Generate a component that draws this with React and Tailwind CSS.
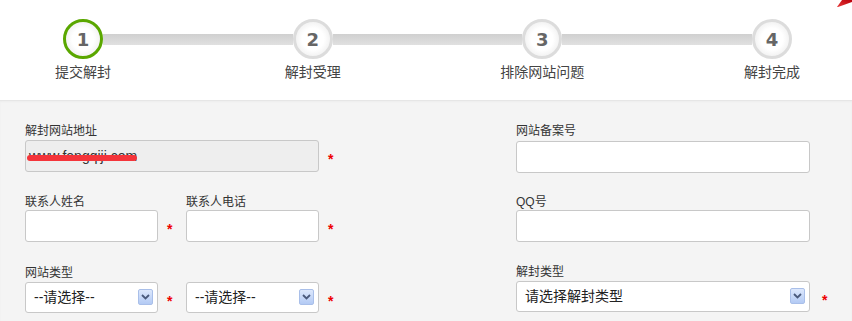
import React from "react";

const FONT = "font-['Liberation_Sans','Noto_Sans_CJK_SC',sans-serif]";

function Circle({ n, active }) {
  return (
    <div
      className={`w-[40px] h-[40px] shrink-0 rounded-full border-[3px] ${
        active ? "border-[#5aa700]" : "border-[#dcdcdc]"
      } bg-radial from-white from-45% to-[#e6e6e6] flex items-center justify-center font-['DejaVu_Sans',sans-serif] font-bold text-[18px] text-[#666]`}
    >
      {n}
    </div>
  );
}

function Bar() {
  return <div className="flex-1 h-[11px] bg-gradient-to-b from-[#d0d0d0] to-[#e0e0e0]" />;
}

function Star({ ml = "ml-[9px]" }) {
  return (
    <span className={`${ml} text-[#e00] text-[14px] font-bold leading-none translate-y-[3px] font-['Liberation_Sans',sans-serif]`}>
      *
    </span>
  );
}

function Arrow() {
  return (
    <span className="absolute right-[4px] top-[6px] w-[15px] h-[16px] rounded-[2px] border border-[#a9bfe9] bg-gradient-to-b from-[#dde8fc] to-[#b3caf4] flex items-center justify-center">
      <svg width="9" height="6" viewBox="0 0 9 6">
        <path d="M1 1 L4.5 4.5 L8 1" fill="none" stroke="#4a5a7c" strokeWidth="1.8" />
      </svg>
    </span>
  );
}

function Input({ w, children, disabled }) {
  return (
    <div
      className={`relative ${w} h-[32px] rounded-[3px] border border-[#c8c8c8] ${
        disabled ? "bg-[#eeeeee]" : "bg-white"
      } flex items-center`}
    >
      {children}
    </div>
  );
}

function Select({ w, text }) {
  return (
    <div className={`relative ${w} h-[31px] rounded-[3px] border border-[#c8c8c8] bg-white flex items-center pl-[8px] text-[14px] text-[#222]`}>
      {text}
      <Arrow />
    </div>
  );
}

function Label({ children }) {
  return <div className="leading-[16px] h-[16px]">{children}</div>;
}

export default function App() {
  const steps = ["提交解封", "解封受理", "排除网站问题", "解封完成"];
  return (
    <div className={`${FONT} w-[852px] h-[321px] overflow-hidden flex flex-col bg-white`}>
      <div className="h-[100px] shrink-0 relative bg-white">
        <svg className="absolute right-0 top-0" width="16" height="8" viewBox="0 0 16 8">
          <defs>
            <linearGradient id="rg" x1="0" y1="1" x2="1" y2="0">
              <stop offset="0" stopColor="#e83a3a" />
              <stop offset="1" stopColor="#b8000a" />
            </linearGradient>
          </defs>
          <polygon points="6,0 16,0 16,2 2,7 1,7" fill="url(#rg)" />
        </svg>
        <div className="flex items-center mt-[19px] ml-[63px] w-[729px]">
          <Circle n="1" active />
          <Bar />
          <Circle n="2" />
          <Bar />
          <Circle n="3" />
          <Bar />
          <Circle n="4" />
        </div>
        <div className="mt-[3px] ml-[41px] w-[773px] flex justify-between">
          {steps.map((s) => (
            <div key={s} className="w-[84px] text-center text-[14px] leading-[20px] text-[#444] whitespace-nowrap">
              {s}
            </div>
          ))}
        </div>
      </div>

      <div className="flex-1 bg-[#f4f4f4] border-t border-[#e6e6e6] shadow-[inset_0_1px_2px_rgba(0,0,0,0.03)] pl-[25px] pt-[22px] text-[12px] text-[#333]">
        <div className="flex">
          {/* left column */}
          <div className="w-[491px] shrink-0">
            <Label>解封网站地址</Label>
            <div className="mt-[1px] flex items-center">
              <Input w="w-[294px]" disabled>
                <span className="pl-[3px] text-[14px] text-[#333]">www.fengqiji.com</span>
                <span className="absolute left-[1px] top-[14px] w-[110px] h-[6px] rounded-full bg-[#f4343a]" />
              </Input>
              <Star />
            </div>

            <div className="mt-[22px] flex">
              <div className="w-[161px] shrink-0">
                <Label>联系人姓名</Label>
                <div className="mt-[0px] flex items-center">
                  <Input w="w-[133px]" />
                  <Star />
                </div>
              </div>
              <div>
                <Label>联系人电话</Label>
                <div className="mt-[0px] flex items-center">
                  <Input w="w-[133px]" />
                  <Star />
                </div>
              </div>
            </div>

            <div className="mt-[23px] flex">
              <div className="w-[161px] shrink-0">
                <Label>网站类型</Label>
                <div className="mt-[1px] flex items-center">
                  <Select w="w-[133px]" text="--请选择--" />
                  <Star />
                </div>
              </div>
              <div>
                <Label>&nbsp;</Label>
                <div className="mt-[1px] flex items-center">
                  <Select w="w-[133px]" text="--请选择--" />
                  <Star />
                </div>
              </div>
            </div>
          </div>

          {/* right column */}
          <div>
            <Label>网站备案号</Label>
            <div className="mt-[2px] flex items-center">
              <Input w="w-[294px]" />
            </div>

            <div className="mt-[21px]">
              <Label>QQ号</Label>
              <div className="mt-[0px] flex items-center">
                <Input w="w-[294px]" />
              </div>
            </div>

            <div className="mt-[22px]">
              <Label>解封类型</Label>
              <div className="mt-[1px] flex items-center">
                <Select w="w-[294px]" text="请选择解封类型" />
                <Star ml="ml-[12px]" />
              </div>
            </div>
          </div>
        </div>
      </div>
    </div>
  );
}
